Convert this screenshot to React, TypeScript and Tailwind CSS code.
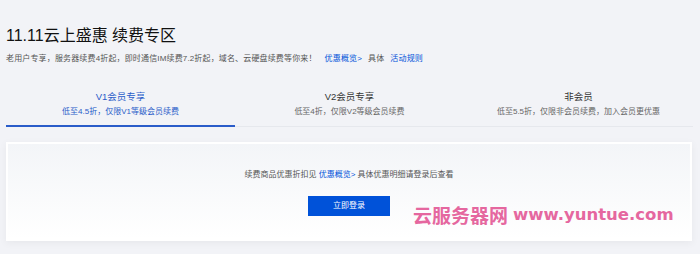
const tabs = [
  { title: 'V1会员专享', desc: '低至4.5折，仅限V1等级会员续费', active: true },
  { title: 'V2会员专享', desc: '低至4折，仅限V2等级会员续费', active: false },
  { title: '非会员', desc: '低至5.5折，仅限非会员续费，加入会员更优惠', active: false },
]

export default function App() {
  return (
    <div
      className="relative w-[700px] h-[254px] overflow-hidden bg-[#f2f3f7] px-[6px] text-[#333]"
      style={{ fontFamily: '"Liberation Sans", "Noto Sans CJK SC", sans-serif' }}
    >
      <h1 className="pt-[27px] text-[16px] leading-[18px] text-[#111]">11.11云上盛惠 续费专区</h1>
      <p className="mt-[8px] text-[8px] leading-[12px] text-[#555] tracking-[0.15px]">
        老用户专享，服务器续费4折起，即时通信IM续费7.2折起，域名、云硬盘续费等你来！
        <a className="ml-[8px] text-[#0052d9]">优惠概览&gt;</a>
        <span className="ml-[6px]">具体</span>
        <a className="ml-[6px] text-[#0052d9]">活动规则</a>
      </p>

      <div className="mt-[26px] grid grid-cols-3 w-[687px] border-b border-[#e6e8ed]">
        {tabs.map((t) => (
          <div
            key={t.title}
            className={`flex flex-col items-center pb-[7px] border-b-2 -mb-px ${
              t.active ? 'border-[#2a5cc9] text-[#2a5cc9]' : 'border-transparent'
            }`}
          >
            <span className={`text-[9.5px] leading-[12px] ${t.active ? '' : 'text-[#333]'}`}>{t.title}</span>
            <span className={`mt-[3px] text-[8px] leading-[12px] ${t.active ? '' : 'text-[#666]'}`}>{t.desc}</span>
          </div>
        ))}
      </div>

      <div className="mt-[15px] w-[686px] h-[99px] border-2 border-white bg-gradient-to-b from-[#f3f5f8] to-white shadow-[0_2px_8px_rgba(0,0,0,0.05)] flex flex-col items-center pt-[25px]">
        <p className="text-[8px] leading-[12px] text-[#555]">
          续费商品优惠折扣见 <a className="text-[#0052d9]">优惠概览&gt;</a> 具体优惠明细请登录后查看
        </p>
        <button className="mt-[15px] w-[82px] h-[20px] bg-[#0052d9] text-white text-[8px] leading-[20px]">
          立即登录
        </button>
      </div>

      <div className="absolute left-[413px] top-[204px] flex items-center gap-[5px] text-[#e5679f] font-bold">
        <span className="text-[19px] leading-[22px]" style={{ fontFamily: '"Noto Sans CJK SC", sans-serif' }}>云服务器网</span>
        <span className="text-[16.5px] leading-[22px]" style={{ fontFamily: '"DejaVu Sans", sans-serif' }}>www.yuntue.com</span>
      </div>
    </div>
  )
}
